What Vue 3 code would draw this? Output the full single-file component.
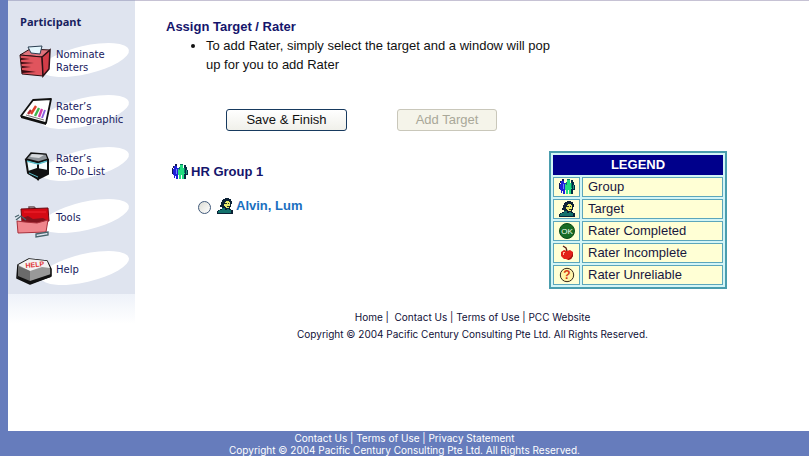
<script setup>
import { ref } from 'vue'

const menu = [
  { id: 'nominate', lines: ['Nominate', 'Raters'] },
  { id: 'demographic', lines: ['Rater’s', 'Demographic'] },
  { id: 'todo', lines: ['Rater’s', 'To-Do List'] },
  { id: 'tools', lines: ['Tools'] },
  { id: 'help', lines: ['Help'] },
]
const legend = [
  { id: 'group', label: 'Group' },
  { id: 'target', label: 'Target' },
  { id: 'ok', label: 'Rater Completed' },
  { id: 'apple', label: 'Rater Incomplete' },
  { id: 'unknown', label: 'Rater Unreliable' },
]
const selected = ref('')
</script>

<template>
  <div class="page">
    <svg class="symbols" width="0" height="0" aria-hidden="true">
      <symbol id="group" viewBox="0 0 16 16">
        <path d="M2 2h3v2h2v7H6v4H4v-3H3v2H2v-3H1V5h1z" fill="#2020d8" />
        <path d="M0 4h1v6H0zM1 2h1v2H1zM3 0h2v2H3z" fill="#101a58" />
        <path d="M12 1h2v2h1v3h1v5h-2v4h-2z" fill="#052c44" />
        <path d="M8 1h3v3h2v6h-1v5h-2v-4H9v4H7v-4H6V5h2z" fill="#22dc80" />
        <path d="M8 0h3v1H8zM7 3h1v3H7zM12 4h1v5h-1z" fill="#087d65" />
        <path d="M4 5h1v5H4z" fill="#6d86ff" />
        <path d="M14 6h1v4h-1z" fill="#1d9b7a" />
      </symbol>
      <symbol id="target" viewBox="0 0 16 16">
        <path d="M4 4h1V2h1V1h2V0h4v1h2v2h1v3h-1v3h-1v2h1v1h2v4H0v-3h1v-1h2v-1h2V9H3V7h1z" fill="#0c2135" />
        <path d="M8 4h1V3h3v1h1v4h-1v2H9V9H8V8H7V6h1z" fill="#e9e96e" />
        <path d="M8 5h2v1H8zM11 5h1v1h-1zM10 8h2v1h-2z" fill="#263526" />
        <path d="M2 12h3v-2h3v2h2v-1h2v1h2v3H1v-2h1z" fill="#12706b" />
      </symbol>
      <symbol id="ok" viewBox="0 0 16 16">
        <circle cx="8" cy="8" r="7.5" fill="#176b24" stroke="#0b4a16" />
      </symbol>
      <symbol id="apple" viewBox="0 0 16 16">
        <path d="M2 7l3-2 3 1 3-1 3 2v4l-2 3-3 1-2-1-2 0-3-3z" fill="#e3201a" />
        <path d="M8 6 7 3 4 1" fill="none" stroke="#5c1a10" stroke-width="1.3" />
        <path d="M4 7h2v1H5v2H4z" fill="#ffb5a2" />
        <path d="m9 14 3-2 2-4v3l-2 3-3 1z" fill="#9c110c" />
      </symbol>
      <symbol id="unknown" viewBox="0 0 16 16">
        <circle cx="8" cy="8" r="6.7" fill="#fff4a8" stroke="#372919" />
      </symbol>

      <symbol id="menu-nominate" viewBox="0 0 48 52">
        <path d="m12 21 10-6 20 1-8 7z" fill="#df737c" stroke="#2b1115" />
        <path d="m12 21 22 2 1 19-21-2z" fill="#e0545d" stroke="#2b1115" />
        <path d="m34 23 8-7-1 19-6 7z" fill="#d33c48" stroke="#2b1115" stroke-width="1.5" />
        <path d="m20 13 14-1-2 8-9-1z" fill="#e4f6fd" stroke="#2b3f52" />
        <path d="m13 24 9 1-9 1zM13 28l13 1-13 1zM14 32l9 1-9 1zM14 36l14 2-14 1z" fill="#3b0a10" />
      </symbol>
      <symbol id="menu-demographic" viewBox="0 0 48 52">
        <path d="m25 14 18-1-5 24-25-7z" fill="#fff" stroke="#111" stroke-width="1.8" stroke-linejoin="round" />
        <path d="m13 30 25 7v2l-25-7z" fill="#111" />
        <path d="m20 28 3-4" stroke="#b02f38" stroke-width="2.4" />
        <path d="m23 28 5-8" stroke="#e0402d" stroke-width="2.4" />
        <path d="m27 30 4-8" stroke="#3fb64d" stroke-width="2.4" />
        <path d="m31 31 3-8" stroke="#d640aa" stroke-width="2.4" />
        <path d="m34 32 3-8" stroke="#8a60e0" stroke-width="2" />
        <path d="M18 29l18 5" stroke="#777" />
      </symbol>
      <symbol id="menu-todo" viewBox="0 0 48 52">
        <path d="m18 22 12 3v16l-10-6z" fill="#eefafb" stroke="#111" stroke-width="2" />
        <path d="m30 25 10-3v14l-10 5z" fill="#f7fdfd" stroke="#111" stroke-width="2" />
        <path d="m20 33 9-3 11 2v4l-10 5-10-5z" fill="#111" />
        <path d="m19 23 11 3 9-3" fill="none" stroke="#59bdc9" stroke-width="1.6" />
        <path d="m21 35 9 4" fill="none" stroke="#59bdc9" />
        <path d="m18 21 5-6 15 1 2 5-10 3z" fill="#8c9298" stroke="#111" stroke-width="1.3" />
        <path d="m24 16 12 1-5 3-9-1z" fill="#d7dade" />
      </symbol>
      <symbol id="menu-tools" viewBox="0 0 48 52">
        <path d="M21 19v-2h5l2 2" fill="none" stroke="#6c5255" stroke-width="1.5" />
        <path d="m13 19 27-1 1 13-27 1z" fill="#d40a14" stroke="#670911" />
        <path d="M16 22h22" stroke="#f32730" />
        <path d="m14 28 6-2 5 3 10-1 5 3-9 3-16-1z" fill="#81131d" />
        <path d="m9 31 8 1 12 1 11-3-2 12-28 1z" fill="#f0868d" stroke="#a82f3a" />
        <path d="m8 30 5-4 5 4M7 27l4-2M28 44l12-2v3l-12 2z" fill="none" stroke="#47646c" stroke-width="1.3" />
      </symbol>
      <symbol id="menu-help" viewBox="0 0 48 52">
        <path d="m10 23 11-6 18 2 4 8v7l-21 8-13-6z" fill="#999" stroke="#111" stroke-width="1.6" stroke-linejoin="round" />
        <path d="m10 23 11-6 18 2 3 7-8-1-12 4z" fill="#f3f3f3" />
        <path d="m10 24 12 5v11l-12-5z" fill="#6b6b6b" />
        <path d="m10 34 12 5 21-7v3l-21 7-12-6z" fill="#111" />
      </symbol>
    </svg>

    <div class="body">
      <aside class="sidebar">
        <nav class="nav" aria-label="Participant">
          <h2 class="nav-title">Participant</h2>
          <a v-for="item in menu" :key="item.id" class="nav-item" href="#">
            <svg class="bubble" viewBox="0 0 127 52" aria-hidden="true">
              <ellipse cx="77" cy="26" rx="45" ry="14" transform="rotate(-13 77 26)" fill="#fff" />
            </svg>
            <svg class="nav-icon" aria-hidden="true">
              <use :href="'#menu-' + item.id" />
              <text v-if="item.id === 'help'" x="27" y="25" class="glyph help-glyph" transform="rotate(-6 27 25)">HELP</text>
            </svg>
            <span class="nav-label">
              <span v-for="line in item.lines" :key="line">{{ line }}</span>
            </span>
          </a>
        </nav>
        <div class="fade"></div>
      </aside>

      <main class="main">
        <h1 class="title">Assign Target / Rater</h1>
        <ul class="notes">
          <li>To add Rater, simply select the target and a window will pop up for you to add Rater</li>
        </ul>
        <div class="actions">
          <button class="btn save" type="button">Save &amp; Finish</button>
          <button class="btn add" type="button" disabled>Add Target</button>
        </div>
        <div class="columns">
          <section class="members">
            <h2 class="group-name">
              <svg class="icon" aria-hidden="true"><use href="#group" /></svg>HR Group 1
            </h2>
            <div class="member">
              <input id="alvin" v-model="selected" class="radio" type="radio" name="target" value="alvin" />
              <label class="member-label" for="alvin">
                <svg class="icon" aria-hidden="true"><use href="#target" /></svg>Alvin, Lum
              </label>
            </div>
          </section>
          <table class="legend">
            <thead>
              <tr><th colspan="2">LEGEND</th></tr>
            </thead>
            <tbody>
              <tr v-for="row in legend" :key="row.id">
                <td class="legend-icon">
                  <svg class="icon" aria-hidden="true">
                    <use :href="'#' + row.id" />
                    <text v-if="row.id === 'ok'" x="8" y="11" class="glyph ok-glyph">OK</text>
                    <text v-if="row.id === 'unknown'" x="8" y="12" class="glyph unknown-glyph">?</text>
                  </svg>
                </td>
                <td class="legend-label">{{ row.label }}</td>
              </tr>
            </tbody>
          </table>
        </div>
        <div class="links">
          <p><a href="#">Home</a> |&nbsp; <a href="#">Contact Us</a> | <a href="#">Terms of Use</a> | <a href="#">PCC Website</a></p>
          <p>Copyright © 2004 Pacific Century Consulting Pte Ltd. All Rights Reserved.</p>
        </div>
      </main>
    </div>

    <footer class="footer">
      <p><a href="#">Contact Us</a> | <a href="#">Terms of Use</a> | <a href="#">Privacy Statement</a></p>
      <p>Copyright © 2004 Pacific Century Consulting Pte Ltd. All Rights Reserved.</p>
    </footer>
  </div>
</template>

<style>
body {
  margin: 0;
  background: #fff;
}
</style>

<style scoped>
.page {
  display: flex;
  flex-direction: column;
  min-height: 100vh;
  font-family: "Liberation Sans", Arial, sans-serif;
  font-size: 13px;
  color: #111;
}
.symbols {
  position: absolute;
}
.glyph {
  font-family: "Liberation Sans", Arial, sans-serif;
  text-anchor: middle;
}
.ok-glyph {
  font-size: 8px;
  fill: #f2fff2;
}
.unknown-glyph {
  font-size: 12px;
  font-weight: bold;
  fill: #d43b16;
}
.help-glyph {
  font-size: 7px;
  font-weight: bold;
  fill: #e03030;
}
h1, h2, p, ul {
  margin: 0;
  padding: 0;
}
a {
  color: inherit;
  text-decoration: none;
}
.body {
  flex: 1;
  display: flex;
  border-left: 8px solid #667cbc;
}
.sidebar {
  flex: none;
  width: 127px;
  border-top: 1px solid #b4b7cf;
}
.nav {
  background: #dfe4ef;
}
.nav-title {
  padding: 13px 0 4px 12px;
  font: bold 11px/16px "Open Sans", Verdana, sans-serif;
  color: #17205e;
}
.nav-item {
  display: grid;
  grid-template-columns: 48px 1fr;
  align-items: center;
  height: 52px;
  font: 10px/13px "DejaVu Sans", Verdana, sans-serif;
  color: #17205e;
}
.bubble {
  grid-area: 1 / 1 / 2 / 3;
  width: 127px;
  height: 52px;
}
.nav-icon {
  grid-area: 1 / 1;
  width: 48px;
  height: 52px;
}
.nav-label {
  grid-area: 1 / 2;
  display: flex;
  flex-direction: column;
  padding-top: 2px;
}
.fade {
  height: 30px;
  background: linear-gradient(#eef2f9, #fff);
}
.main {
  flex: 1;
  padding: 17px 82px 16px 31px;
  border-top: 1px solid #c6c2d4;
}
.title {
  font-size: 13px;
  line-height: 18px;
  color: #15156c;
}
.notes {
  max-width: 360px;
  padding-left: 40px;
  line-height: 19px;
}
.actions {
  display: flex;
  gap: 50px;
  padding: 35px 0 20px 60px;
}
.btn {
  box-sizing: border-box;
  height: 22px;
  padding: 0;
  border: 1px solid #173a5f;
  border-radius: 3px;
  background: linear-gradient(#fff, #f0f0ea);
  font: 13px/18px "Liberation Sans", Arial, sans-serif;
  color: #111;
}
.save {
  width: 121px;
}
.add {
  width: 100px;
  border-color: #c9c7ba;
  background: #f5f4ea;
  color: #a9a899;
}
.columns {
  display: flex;
  justify-content: space-between;
  align-items: flex-start;
}
.members {
  padding: 12px 0 0 6px;
}
.group-name {
  display: flex;
  align-items: center;
  gap: 3px;
  font-size: 13px;
  line-height: 18px;
  color: #15156c;
}
.icon {
  display: block;
  width: 16px;
  height: 16px;
}
.member {
  display: flex;
  align-items: center;
  gap: 6px;
  padding: 16px 0 0 26px;
}
.member-label {
  display: flex;
  align-items: center;
  gap: 3px;
  font-weight: bold;
  line-height: 18px;
  color: #1a6fc0;
}
.radio {
  appearance: none;
  box-sizing: border-box;
  width: 13px;
  height: 13px;
  margin: 3px 0 0;
  border: 1px solid #40597a;
  border-radius: 50%;
  background: linear-gradient(135deg, #dcdcd4, #fff);
}
.radio:checked {
  background: radial-gradient(#21a121 35%, #fff 40%);
}
.legend {
  width: 178px;
  border: 2px solid #4a9dae;
  border-spacing: 2px;
  background: #d3f5f6;
}
.legend th {
  height: 20px;
  padding: 0;
  background: #00008b;
  font-size: 13px;
  line-height: 20px;
  color: #fff;
}
.legend td {
  height: 18px;
  border: 1px solid #5ca6bb;
  background: #ffffd5;
  line-height: 18px;
}
.legend .legend-icon {
  width: 25px;
  padding: 0;
}
.legend-icon .icon {
  margin: 0 auto;
}
.legend .legend-label {
  padding: 0 5px;
  color: #17173d;
}
.links {
  padding: 20px 0 0 52px;
  text-align: center;
  font: 10px/17px Inter, Verdana, sans-serif;
  color: #101038;
}
.footer {
  padding-top: 1px;
  background: #667cbc;
  text-align: center;
  font: 10px/12px Inter, Verdana, sans-serif;
  color: #fff;
}
</style>
